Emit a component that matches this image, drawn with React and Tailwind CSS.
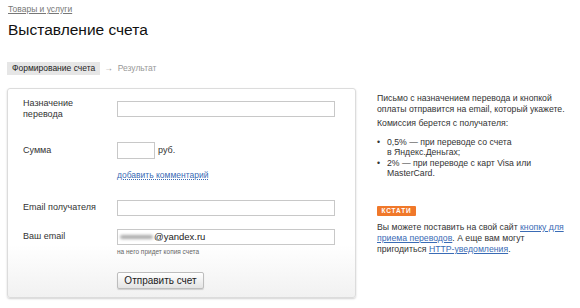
export default function App() {
  return (
    <div className="h-[308px] w-[580px] overflow-hidden bg-white font-['Liberation_Sans',Arial,sans-serif] text-[#222]">
      <div className="px-[8px] pt-[3px]">
        <div className="text-[8.5px] leading-[12px]">
          <a className="text-[#777] underline">Товары и услуги</a>
        </div>
        <h1 className="mt-[5px] text-[15.5px] leading-[20px] text-[#111]">Выставление счета</h1>
        <div className="mt-[22px] flex h-[13px] items-center text-[8.5px] leading-[13px]">
          <span className="-ml-[1px] bg-[#e6e6e6] px-[5px] text-[#222]">Формирование счета</span>
          <span className="ml-[4px] text-[#999]">→</span>
          <span className="ml-[5px] text-[#999]">Результат</span>
        </div>
      </div>

      <div className="mt-[13px] flex pl-[7px]">
        <div className="h-[210px] w-[349px] rounded-[3px] border border-[#dcdcdc] bg-[linear-gradient(180deg,#ffffff_75%,#f1f1f1_100%)] pl-[15px] pt-[9px] shadow-[0_1px_2px_rgba(0,0,0,0.18)]">
          <div className="flex text-[9px] leading-[11px] text-[#333]">
            <div className="w-[94px]">Назначение<br />перевода</div>
            <div className="mt-[3px] h-[16px] w-[218px] border border-[#c8c8c8] bg-white" />
          </div>

          <div className="mt-[22px] flex items-center text-[9px] text-[#333]">
            <div className="w-[94px]">Сумма</div>
            <div className="h-[17px] w-[38px] border border-[#c8c8c8] bg-white" />
            <span className="ml-[3px]">руб.</span>
          </div>

          <div className="ml-[94px] mt-[11px] text-[8.5px] leading-[11px]">
            <a className="text-[#3a6bb5] underline decoration-dotted">добавить комментарий</a>
          </div>

          <div className="mt-[19px] flex items-center text-[9px] text-[#333]">
            <div className="w-[94px]">Email получателя</div>
            <div className="h-[16px] w-[218px] border border-[#c8c8c8] bg-white" />
          </div>

          <div className="mt-[13px] flex items-center text-[9px] text-[#333]">
            <div className="w-[94px]">Ваш email</div>
            <div className="flex h-[16px] w-[218px] items-center border border-[#c8c8c8] bg-white text-[9.5px] text-[#222]">
              <span className="ml-[2px] mr-[1px] h-[4px] w-[33px] rounded-full bg-[#aaa] blur-[1.5px]" />
              <span>@yandex.ru</span>
            </div>
          </div>
          <div className="ml-[94px] mt-[3px] text-[6.5px] leading-[8px] text-[#666]">на него придет копия счета</div>

          <div className="ml-[94px] mt-[11px]">
            <button className="h-[17px] w-[87px] rounded-[2px] border border-[#bdbdbd] bg-[linear-gradient(180deg,#ffffff,#e4e4e4)] text-[10px] leading-[15px] text-[#222] shadow-[0_1px_1px_rgba(0,0,0,0.15)]">
              Отправить счет
            </button>
          </div>
        </div>

        <div className="ml-[21px] w-[190px] pt-[5px] text-[8.7px] leading-[11px] text-[#333]">
          <p>Письмо с назначением перевода и кнопкой оплаты отправится на email, который укажете.</p>
          <p className="mt-[3px]">Комиссия берется с получателя:</p>
          <ul className="mt-[8px] leading-[10px]">
            <li className="flex">
              <span className="w-[10px] shrink-0">•</span>
              <span>0,5% — при переводе со счета<br />в Яндекс.Деньгах;</span>
            </li>
            <li className="mt-[1px] flex">
              <span className="w-[10px] shrink-0">•</span>
              <span>2% — при переводе с карт Visa или MasterCard.</span>
            </li>
          </ul>

          <div className="mt-[28px] flex">
            <span className="inline-block h-[10px] w-[39px] rounded-[1px] bg-[#f0782a] text-center text-[6.5px] font-bold leading-[10px] tracking-[0.8px] text-white">КСТАТИ</span>
          </div>
          <p className="mt-[6px]">
            Вы можете поставить на свой сайт <a className="text-[#3a6bb5] underline">кнопку для приема переводов</a>. А еще вам могут пригодиться <a className="text-[#3a6bb5] underline">HTTP-уведомления</a>.
          </p>
        </div>
      </div>
    </div>
  );
}
